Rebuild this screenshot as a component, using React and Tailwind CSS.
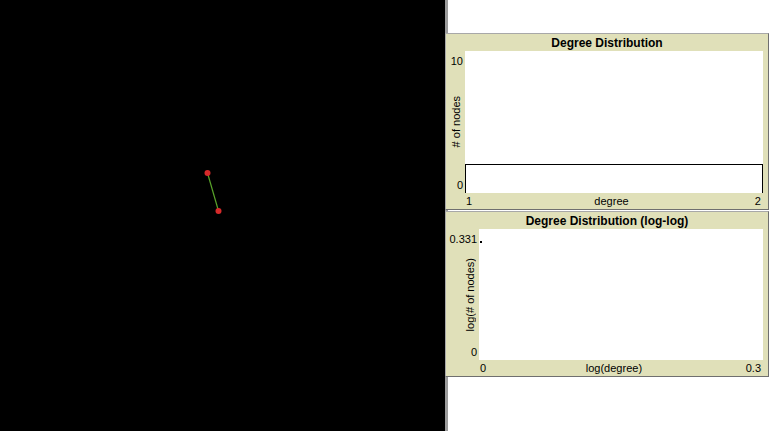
import React from "react";

const font = { fontFamily: '"Liberation Sans", Arial, sans-serif' };

function Plot({ title, yMax, yMin, yName, xMin, xName, xMax, gutter, plotH, children }) {
  return (
    <div className="-ml-[3px] w-[324px] border border-[#a8a8a8] border-r-[#6f6f6f] border-b-[#6f6f6f] bg-[#e0e0b9] text-black">
      <div className="h-[17px] flex items-center justify-center text-[12px] font-bold leading-none pt-[1px]">
        {title}
      </div>
      <div className="flex pr-[5px]">
        <div className={`${gutter} relative flex flex-col items-end justify-between pr-[2px] text-[11px] leading-none`} style={{ height: plotH }}>
          <span className="mt-[5px]">{yMax}</span>
          <span className="absolute left-0 right-0 top-0 bottom-0 flex items-center justify-end pr-[3px]">
            <span className="[writing-mode:vertical-rl] rotate-180 whitespace-nowrap">{yName}</span>
          </span>
          <span className="mb-[2px]">{yMin}</span>
        </div>
        <div className="flex-1 bg-white relative" style={{ height: plotH }}>
          {children}
        </div>
      </div>
      <div className="flex pr-[7px]">
        <div className={gutter} />
        <div className="flex-1 h-[16px] flex items-center justify-between text-[11px] leading-none pl-[1px]">
          <span>{xMin}</span>
          <span className="-ml-[4px]">{xName}</span>
          <span>{xMax}</span>
        </div>
      </div>
    </div>
  );
}

export default function App() {
  return (
    <div className="w-[772px] h-[431px] flex overflow-hidden bg-white" style={font}>
      <div className="w-[445px] h-full bg-black relative">
        <svg className="absolute inset-0" width="445" height="431">
          <line x1="207.5" y1="173" x2="218.5" y2="211" stroke="#59a32a" strokeWidth="1.2" />
          <circle cx="207.5" cy="173" r="3" fill="#d62a2a" />
          <circle cx="218.5" cy="211" r="3" fill="#d62a2a" />
        </svg>
      </div>
      <div className="flex-1 h-full border-l-[3px] border-[#9c9c9c] flex flex-col pt-[33px] gap-[1px]">
        <Plot
          title="Degree Distribution"
          yMax="10"
          yMin="0"
          yName="# of nodes"
          xMin="1"
          xName="degree"
          xMax="2"
          gutter="w-[19px]"
          plotH={142}
        >
          <div className="absolute left-0 right-0 bottom-0 h-[29px] border-t border-l border-r border-black" />
        </Plot>
        <Plot
          title="Degree Distribution (log-log)"
          yMax="0.331"
          yMin="0"
          yName="log(# of nodes)"
          xMin="0"
          xName="log(degree)"
          xMax="0.3"
          gutter="w-[33px]"
          plotH={131}
        >
          <div className="absolute left-[1px] top-[12px] w-[2px] h-[2px] bg-black" />
        </Plot>
      </div>
    </div>
  );
}
